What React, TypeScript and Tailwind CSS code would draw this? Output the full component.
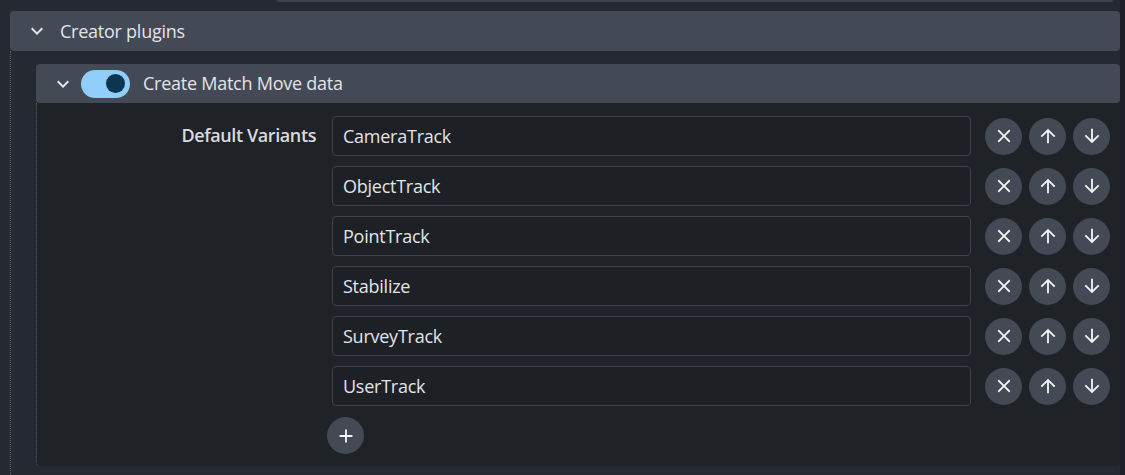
import { ReactNode } from 'react'

const variants = ['CameraTrack', 'ObjectTrack', 'PointTrack', 'Stabilize', 'SurveyTrack', 'UserTrack']

function Icon({ d, size = 22 }: { d: string; size?: number }) {
  return (
    <svg width={size} height={size} viewBox="0 0 24 24" fill="currentColor">
      <path d={d} />
    </svg>
  )
}

const paths = {
  close: 'M19 6.41 17.59 5 12 10.59 6.41 5 5 6.41 10.59 12 5 17.59 6.41 19 12 13.41 17.59 19 19 17.59 13.41 12z',
  up: 'M4 12l1.41 1.41L11 7.83V20h2V7.83l5.58 5.59L20 12l-8-8-8 8z',
  down: 'M20 12l-1.41-1.41L13 16.17V4h-2v12.17l-5.58-5.59L4 12l8 8 8-8z',
  add: 'M19 13h-6v6h-2v-6H5v-2h6V5h2v6h6v2z',
  chevron: 'M16.59 8.59 12 13.17 7.41 8.59 6 10l6 6 6-6z',
}

function RoundButton({ children }: { children: ReactNode }) {
  return (
    <button className="w-[37px] h-[37px] rounded-full bg-[#434955] text-[#f2f3f5] flex items-center justify-center">
      {children}
    </button>
  )
}

export default function App() {
  return (
    <div
      className="flex w-[1125px] h-[475px] bg-[#252932] text-[#e2e4e8] overflow-hidden"
      style={{ fontFamily: '"Open Sans", "Noto Sans", sans-serif' }}
    >
      <div className="w-[1120px] flex flex-col">
        {/* bottom of previous field */}
        <div className="ml-[277px] mr-[7px] h-[2px] bg-[#3d424b] rounded-b-[3px]" />

        <div className="ml-[10px] mt-[9px] flex flex-col flex-1">
          {/* Creator plugins header */}
          <div className="h-[40px] rounded-[4px] bg-[#434955] flex items-center pl-[15px]">
            <Icon d={paths.chevron} size={24} />
            <span className="ml-[11px] text-[18px] tracking-[-0.25px]">Creator plugins</span>
          </div>

          <div className="flex-1 border-l border-dotted border-[#5b616c] pl-[25px] pt-[13px]">
            {/* Create Match Move data header */}
            <div className="h-[39px] rounded-[4px] bg-[#434955] flex items-center pl-[15px]">
              <Icon d={paths.chevron} size={24} />
              <div className="ml-[6px] w-[49px] h-[28px] rounded-full bg-[#90cdf9] flex items-center justify-end pr-[5px]">
                <div className="w-[19px] h-[19px] rounded-full bg-[#0b3551]" />
              </div>
              <span className="ml-[13px] text-[18px] tracking-[-0.25px]">Create Match Move data</span>
            </div>

            {/* Body */}
            <div className="bg-[#1f2227] border-l border-dotted border-[#5b616c] rounded-b-[4px] pt-[13px] pb-[12px] pr-[10px] flex">
              <div className="w-[280px] text-right font-semibold text-[18px] text-[#d9dbdf] pt-[6px] tracking-[-0.4px]">
                Default Variants
              </div>
              <div className="ml-[16px] flex-1 flex flex-col gap-[10px]">
                {variants.map((v) => (
                  <div key={v} className="flex items-center">
                    <div className="w-[639px] h-[40px] border border-[#3e424a] rounded-[4px] bg-[#1d2025] flex items-center pl-[10px] text-[18px] tracking-[-0.25px]">
                      {v}
                    </div>
                    <div className="ml-[14px] flex gap-[7px]">
                      <RoundButton>
                        <Icon d={paths.close} />
                      </RoundButton>
                      <RoundButton>
                        <Icon d={paths.up} />
                      </RoundButton>
                      <RoundButton>
                        <Icon d={paths.down} />
                      </RoundButton>
                    </div>
                  </div>
                ))}
                <div className="-ml-[5px] mt-[1px]">
                  <RoundButton>
                    <Icon d={paths.add} />
                  </RoundButton>
                </div>
              </div>
            </div>
          </div>
        </div>
      </div>
      <div className="flex-1 bg-[#1c1f25]" />
    </div>
  )
}
